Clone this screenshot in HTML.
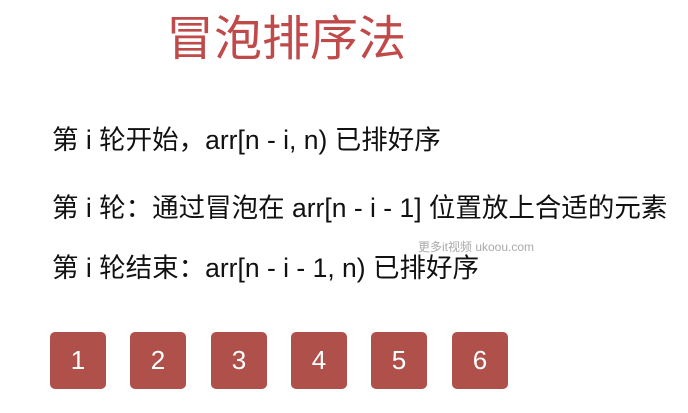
<!DOCTYPE html>
<html><head><meta charset="utf-8"><style>
body{margin:0;width:688px;height:413px;background:#fff;position:relative;overflow:hidden;font-family:"Liberation Sans","Noto Sans CJK SC",sans-serif;}
.t{position:absolute;left:166px;top:12px;font-size:48px;line-height:56px;color:#c04a4a;white-space:nowrap;}
.l{position:absolute;left:52px;font-size:26.5px;line-height:32px;color:#111;white-space:nowrap;}
.b{position:absolute;top:332px;width:56px;height:57px;background:#b0504a;border-radius:5px;color:#fff;font-size:26px;line-height:57px;text-align:center;}
.w{position:absolute;left:418px;top:238px;font-size:12px;color:#aaa;}
</style></head><body>
<div class="t">冒泡排序法</div>
<div class="l" style="top:124px">第 i 轮开始，arr[n - i, n) 已排好序</div>
<div class="l" style="top:192px">第 i 轮：通过冒泡在 arr[n - i - 1] 位置放上合适的元素</div>
<div class="l" style="top:252px">第 i 轮结束：arr[n - i - 1, n) 已排好序</div>
<div class="w">更多it视频 ukoou.com</div>
<div class="b" style="left:50px">1</div>
<div class="b" style="left:130px">2</div>
<div class="b" style="left:211px">3</div>
<div class="b" style="left:291px">4</div>
<div class="b" style="left:371px">5</div>
<div class="b" style="left:452px">6</div>
</body></html>
